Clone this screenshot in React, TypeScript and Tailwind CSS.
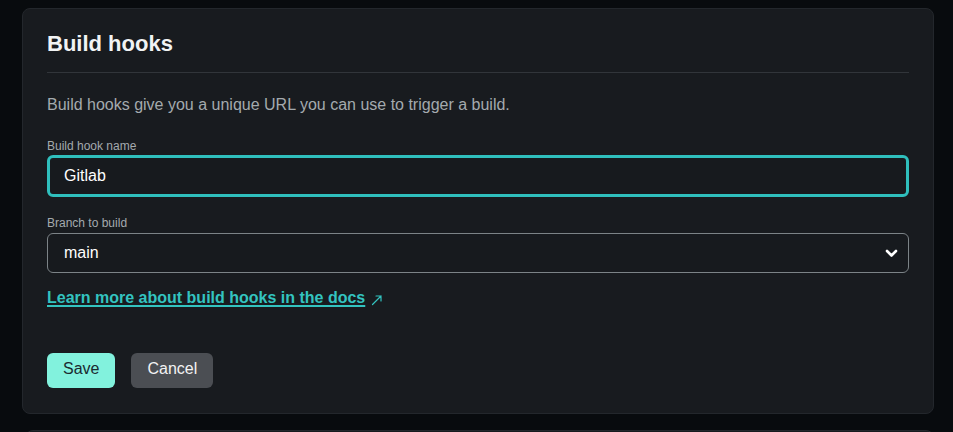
export default function App() {
  return (
    <div
      className="h-[432px] bg-[#080b0e] pl-[22px] pr-[19px] pt-2 overflow-hidden"
      style={{ fontFamily: '"Liberation Sans", Arial, sans-serif' }}
    >
      <section className="rounded-lg border border-[#23272c] bg-[#181b1f] px-6 pt-[21px] pb-[25px]">
        <h2 className="text-[22px] font-bold leading-7 text-[#f1f3f4]">Build hooks</h2>
        <div className="mt-[14px] h-px bg-[#31353a]" />

        <p className="mt-5 text-base leading-6 text-[#a4aaae]">
          Build hooks give you a unique URL you can use to trigger a build.
        </p>

        <div className="mt-[21px]">
          <label className="block text-xs leading-4 text-[#a4aaae]">Build hook name</label>
          <div className="mt-[1px] flex h-[42px] items-center rounded-md border-[3px] border-[#2fbfbd] bg-[#171a1e] px-[14px] text-base text-white">
            Gitlab
          </div>
        </div>

        <div className="mt-[18px]">
          <label className="block text-xs leading-4 text-[#a4aaae]">Branch to build</label>
          <div className="mt-[2px] flex h-[40px] items-center justify-between rounded-md border border-[#7c8387] bg-[#171a1e] pl-4 pr-[10px] text-base text-white">
            <span>main</span>
            <svg width="13" height="9" viewBox="0 0 13 9" fill="none">
              <path d="M2 2l4.5 4.5L11 2" stroke="white" strokeWidth="2.6" strokeLinecap="round" strokeLinejoin="round" />
            </svg>
          </div>
        </div>

        <div className="mt-[13px] flex items-center gap-[6px]">
          <a href="#" className="text-base font-bold text-[#33c4c0] underline underline-offset-2 decoration-[1.5px]">
            Learn more about build hooks in the docs
          </a>
          <svg width="12" height="12" viewBox="0 0 12 12" fill="none" className="mt-[3px] text-[#33c4c0]">
            <path d="M1.5 10.5 10 2M5 2h5v5" stroke="currentColor" strokeWidth="1.2" strokeLinecap="round" />
          </svg>
        </div>

        <div className="mt-[43px] flex gap-4">
          <button className="h-[35px] rounded-md bg-[#82f2dd] px-4 pb-1 text-base text-[#1a2a30]">Save</button>
          <button className="h-[35px] rounded-md bg-[#4b4e53] px-4 pb-1 text-base text-[#f3f3f3]">Cancel</button>
        </div>
      </section>

      <div className="mt-4 ml-[3px] h-8 rounded-lg border border-[#23272c] bg-[#181b1f]" />
    </div>
  );
}
